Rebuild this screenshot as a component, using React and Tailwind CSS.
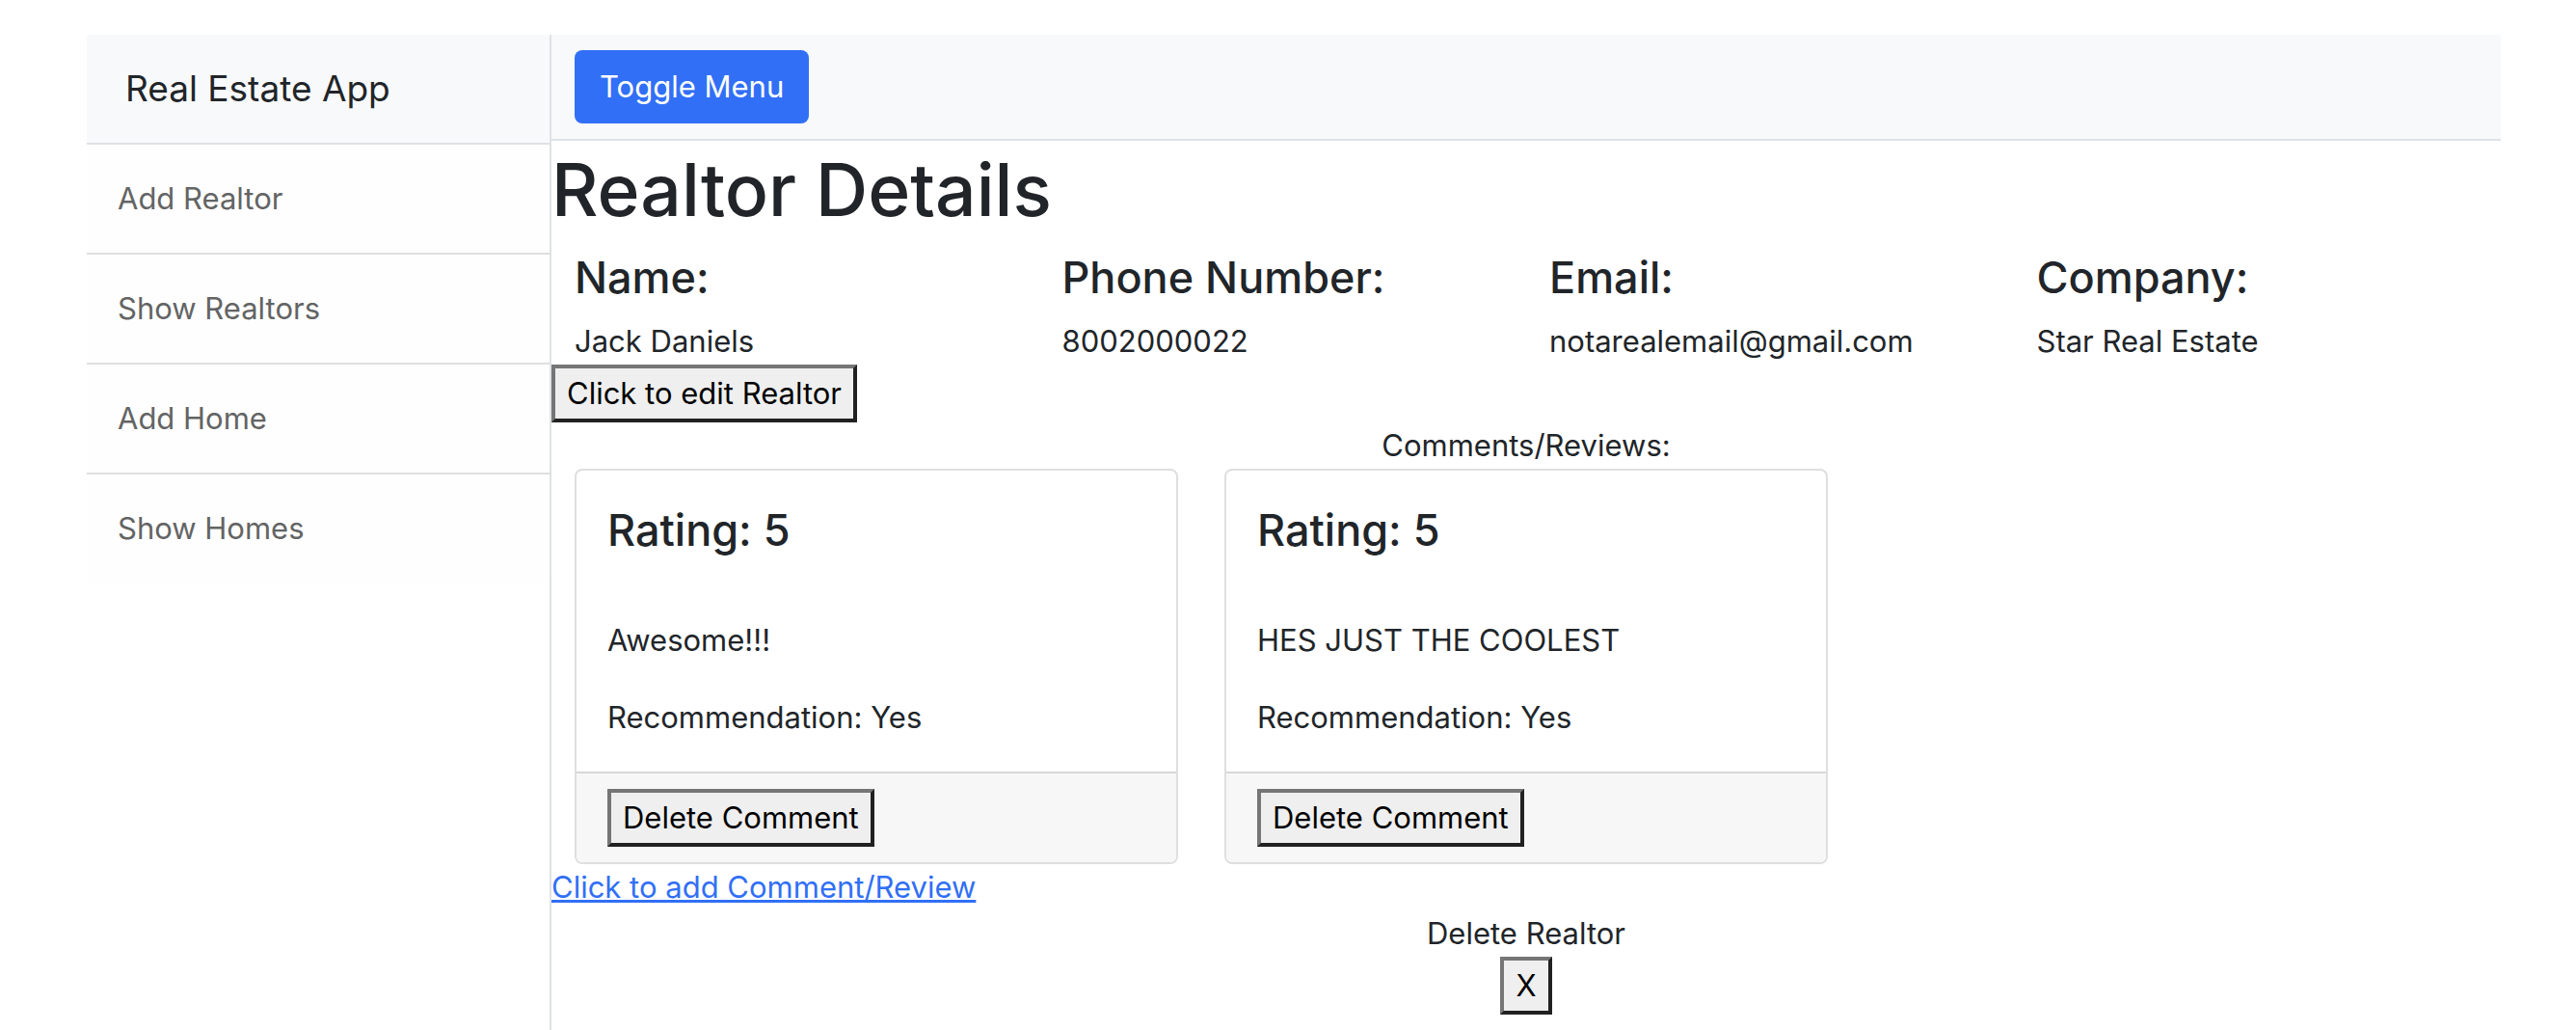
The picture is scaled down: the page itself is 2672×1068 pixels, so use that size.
const menu = ["Add Realtor", "Show Realtors", "Add Home", "Show Homes"];

const details = [
  { label: "Name:", value: "Jack Daniels" },
  { label: "Phone Number:", value: "8002000022" },
  { label: "Email:", value: "notarealemail@gmail.com" },
  { label: "Company:", value: "Star Real Estate" },
];

const comments = [
  { rating: 5, text: "Awesome!!!", recommend: "Yes" },
  { rating: 5, text: "HES JUST THE COOLEST", recommend: "Yes" },
];

function PlainButton({ children, label }) {
  return (
    <button
      type="button"
      aria-label={label}
      className="block border-4 border-t-[#767676] border-l-[#767676] border-r-[#212121] border-b-[#212121] bg-[#efefef] px-3 py-0.5 text-black"
    >
      {children}
    </button>
  );
}

function Sidebar() {
  return (
    <aside className="w-[482px] shrink-0 border-r-2 border-[#dee2e6]">
      <div className="border-b-2 border-[#dee2e6] bg-[#f8f9fa] px-10 py-7 text-[37px] leading-[56px]">
        Real Estate App
      </div>
      <nav className="divide-y-2 divide-[#dfdfdf]">
        {menu.map((item) => (
          <a key={item} href="#" className="block bg-[#fefefe] p-8 text-[#636464]">
            {item}
          </a>
        ))}
      </nav>
    </aside>
  );
}

function CommentCard({ comment }) {
  return (
    <article className="overflow-hidden rounded-lg border-2 border-[#dfdfdf] bg-white">
      <div className="p-8">
        <h4 className="text-[45px] leading-[60px] font-medium">Rating: {comment.rating}</h4>
        <p className="mt-15">{comment.text}</p>
        <p className="mt-8">Recommendation: {comment.recommend}</p>
      </div>
      <div className="border-t-2 border-[#d8d8d8] bg-[#f7f7f7] px-8 py-4">
        <PlainButton>Delete Comment</PlainButton>
      </div>
    </article>
  );
}

export default function App() {
  return (
    <div className="flex min-h-screen bg-white pt-9 pr-[78px] pl-[90px] font-['Inter','Liberation_Sans',sans-serif] text-[31px] leading-[48px] text-[#212529]">
      <Sidebar />
      <main className="min-w-0 flex-1">
        <header className="border-b-2 border-[#dee2e6] bg-[#f8f9fa] px-6 py-4">
          <button type="button" className="block rounded-lg bg-[#316ff6] px-[26px] py-3.5 text-white">
            Toggle Menu
          </button>
        </header>
        <h1 className="mb-2.5 text-[75px] leading-[102px] font-medium">Realtor Details</h1>
        <dl className="grid grid-cols-4">
          {details.map((d) => (
            <div key={d.label} className="px-6">
              <dt className="mb-3 text-[45px] leading-[60px] font-medium">{d.label}</dt>
              <dd>{d.value}</dd>
            </div>
          ))}
        </dl>
        <PlainButton>Click to edit Realtor</PlainButton>
        <p className="text-center">Comments/Reviews:</p>
        <div className="grid grid-cols-3 gap-12 px-6">
          {comments.map((c) => (
            <CommentCard key={c.text} comment={c} />
          ))}
        </div>
        <a href="#" className="inline-block align-top text-[#316ff6] underline">
          Click to add Comment/Review
        </a>
        <div className="flex flex-col items-center">
          <p>Delete Realtor</p>
          <PlainButton label="Delete Realtor">X</PlainButton>
        </div>
      </main>
    </div>
  );
}
